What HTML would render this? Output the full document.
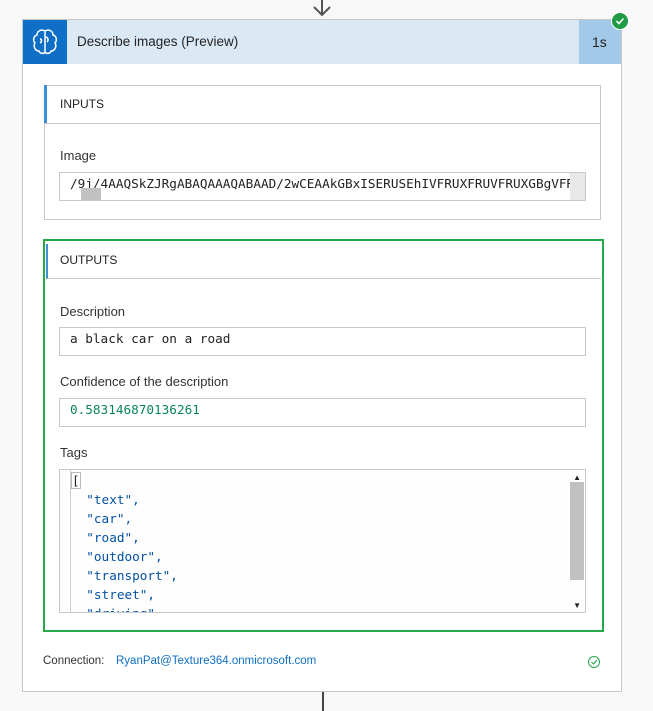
<!DOCTYPE html>
<html><head><style>
body{margin:0;width:653px;height:711px;background:#f8f8f8;font-family:"Segoe UI","Liberation Sans",sans-serif;position:relative;overflow:hidden;color:#333}
.a{position:absolute}
.mono{font-family:"DejaVu Sans Mono","Liberation Mono",monospace;font-size:12.7px}
.lbl{font-size:13px;color:#333}
.box{background:#fff;border:1px solid #c8c8c8;box-sizing:border-box}
</style></head><body>
<div class="a" style="left:321px;top:0;width:2px;height:14px;background:#555"></div>
<svg class="a" style="left:312px;top:4px" width="20" height="14"><path d="M2 3 L10 11 L18 3" stroke="#555" stroke-width="2" fill="none"/></svg>
<div class="a" style="left:22px;top:19px;width:600px;height:673px;background:#fff;border:1px solid #c8c8c8;box-sizing:border-box"></div>
<div class="a" style="left:23px;top:20px;width:598px;height:44px;background:#dbe9f5"></div>
<div class="a" style="left:23px;top:20px;width:44px;height:44px;background:#0f6fc6"></div>
<svg class="a" style="left:30px;top:27px" width="30" height="30" viewBox="0 0 30 30" fill="none" stroke="#fff" stroke-width="1.5"><path d="M15 4 C11 2 7 4 7 8 C3 9 3 14 5 16 C3 19 5 24 9 24 C10 27 14 27 15 25 Z"/><path d="M15 4 C19 2 23 4 23 8 C27 9 27 14 25 16 C27 19 25 24 21 24 C20 27 16 27 15 25"/><path d="M15 10 C18 10 19 13 17 15 M10 12 C12 12 12 15 10 16"/></svg>
<div class="a" style="left:77px;top:34px;font-size:13.5px;color:#222">Describe images (Preview)</div>
<div class="a" style="left:579px;top:20px;width:42px;height:44px;background:#a3c9e8"></div>
<div class="a" style="left:592px;top:34px;font-size:14px;color:#222">1s</div>
<div class="a" style="left:611px;top:12px;width:16px;height:16px;border-radius:50%;background:#1f9a45;border:1px solid #fff"></div>
<svg class="a" style="left:614px;top:15px" width="12" height="12"><path d="M2.5 6 L5 8.5 L9.5 3.5" stroke="#fff" stroke-width="1.6" fill="none"/></svg>

<div class="a box" style="left:44px;top:85px;width:557px;height:135px"></div>
<div class="a" style="left:44px;top:85px;width:3px;height:38px;background:#3f8fd6"></div>
<div class="a" style="left:45px;top:123px;width:555px;height:1px;background:#c8c8c8"></div>
<div class="a" style="left:60px;top:97px;font-size:12px;color:#222">INPUTS</div>
<div class="a lbl" style="left:60px;top:148px">Image</div>
<div class="a box" style="left:59px;top:172px;width:527px;height:29px;overflow:hidden"><div class="mono" style="position:absolute;left:10px;top:3px;white-space:nowrap;color:#222">/9j/4AAQSkZJRgABAQAAAQABAAD/2wCEAAkGBxISERUSEhIVFRUXFRUVFRUXGBgVFRYX</div>
<div style="position:absolute;left:21px;top:15px;width:20px;height:12px;background:#c1c1c1"></div>
<div style="position:absolute;right:0;top:0;width:15px;height:27px;background:#e8e8e8"></div></div>

<div class="a" style="left:43px;top:239px;width:561px;height:393px;border:2px solid #25a84a;box-sizing:border-box;background:#fff"></div>
<div class="a" style="left:46px;top:244px;width:555px;height:35px;border-left:2px solid #3f8fd6;border-bottom:1px solid #c8c8c8;box-sizing:border-box"></div>
<div class="a" style="left:60px;top:253px;font-size:12px;color:#222">OUTPUTS</div>
<div class="a lbl" style="left:60px;top:304px">Description</div>
<div class="a box mono" style="left:59px;top:327px;width:527px;height:29px;padding:3px 10px;color:#222">a black car on a road</div>
<div class="a lbl" style="left:60px;top:374px">Confidence of the description</div>
<div class="a box mono" style="left:59px;top:398px;width:527px;height:29px;padding:3px 10px;color:#098658">0.583146870136261</div>
<div class="a lbl" style="left:60px;top:445px">Tags</div>
<div class="a box" style="left:59px;top:469px;width:527px;height:144px;overflow:hidden;background:#fefefe">
<div style="position:absolute;left:10px;top:0;width:1px;height:144px;background:#ccc"></div>
<div class="mono" style="position:absolute;left:11px;top:1px;line-height:19px;color:#0451a5;white-space:pre"><span style="color:#222;border:1px solid #bbb">[</span>
  "text",
  "car",
  "road",
  "outdoor",
  "transport",
  "street",
  "driving",</div>
<div style="position:absolute;right:1px;top:12px;width:14px;height:98px;background:#c1c1c1"></div>
<div style="position:absolute;right:4px;top:3px;font-size:8px;color:#222">▲</div>
<div style="position:absolute;right:4px;bottom:2px;font-size:8px;color:#222">▼</div>
</div>

<div class="a" style="left:43px;top:655px;font-size:11.5px;color:#333">Connection:</div>
<div class="a" style="left:116px;top:655px;font-size:11.5px;color:#0f6fc6">RyanPat@Texture364.onmicrosoft.com</div>
<div class="a" style="left:588px;top:656px;width:10px;height:10px;border:1px solid #25a84a;border-radius:50%"></div>
<svg class="a" style="left:589px;top:657px" width="10" height="10"><path d="M2.5 5 L4.5 7 L8 3" stroke="#25a84a" stroke-width="1.1" fill="none"/></svg>
<div class="a" style="left:322px;top:692px;width:2px;height:19px;background:#444"></div>
</body></html>
